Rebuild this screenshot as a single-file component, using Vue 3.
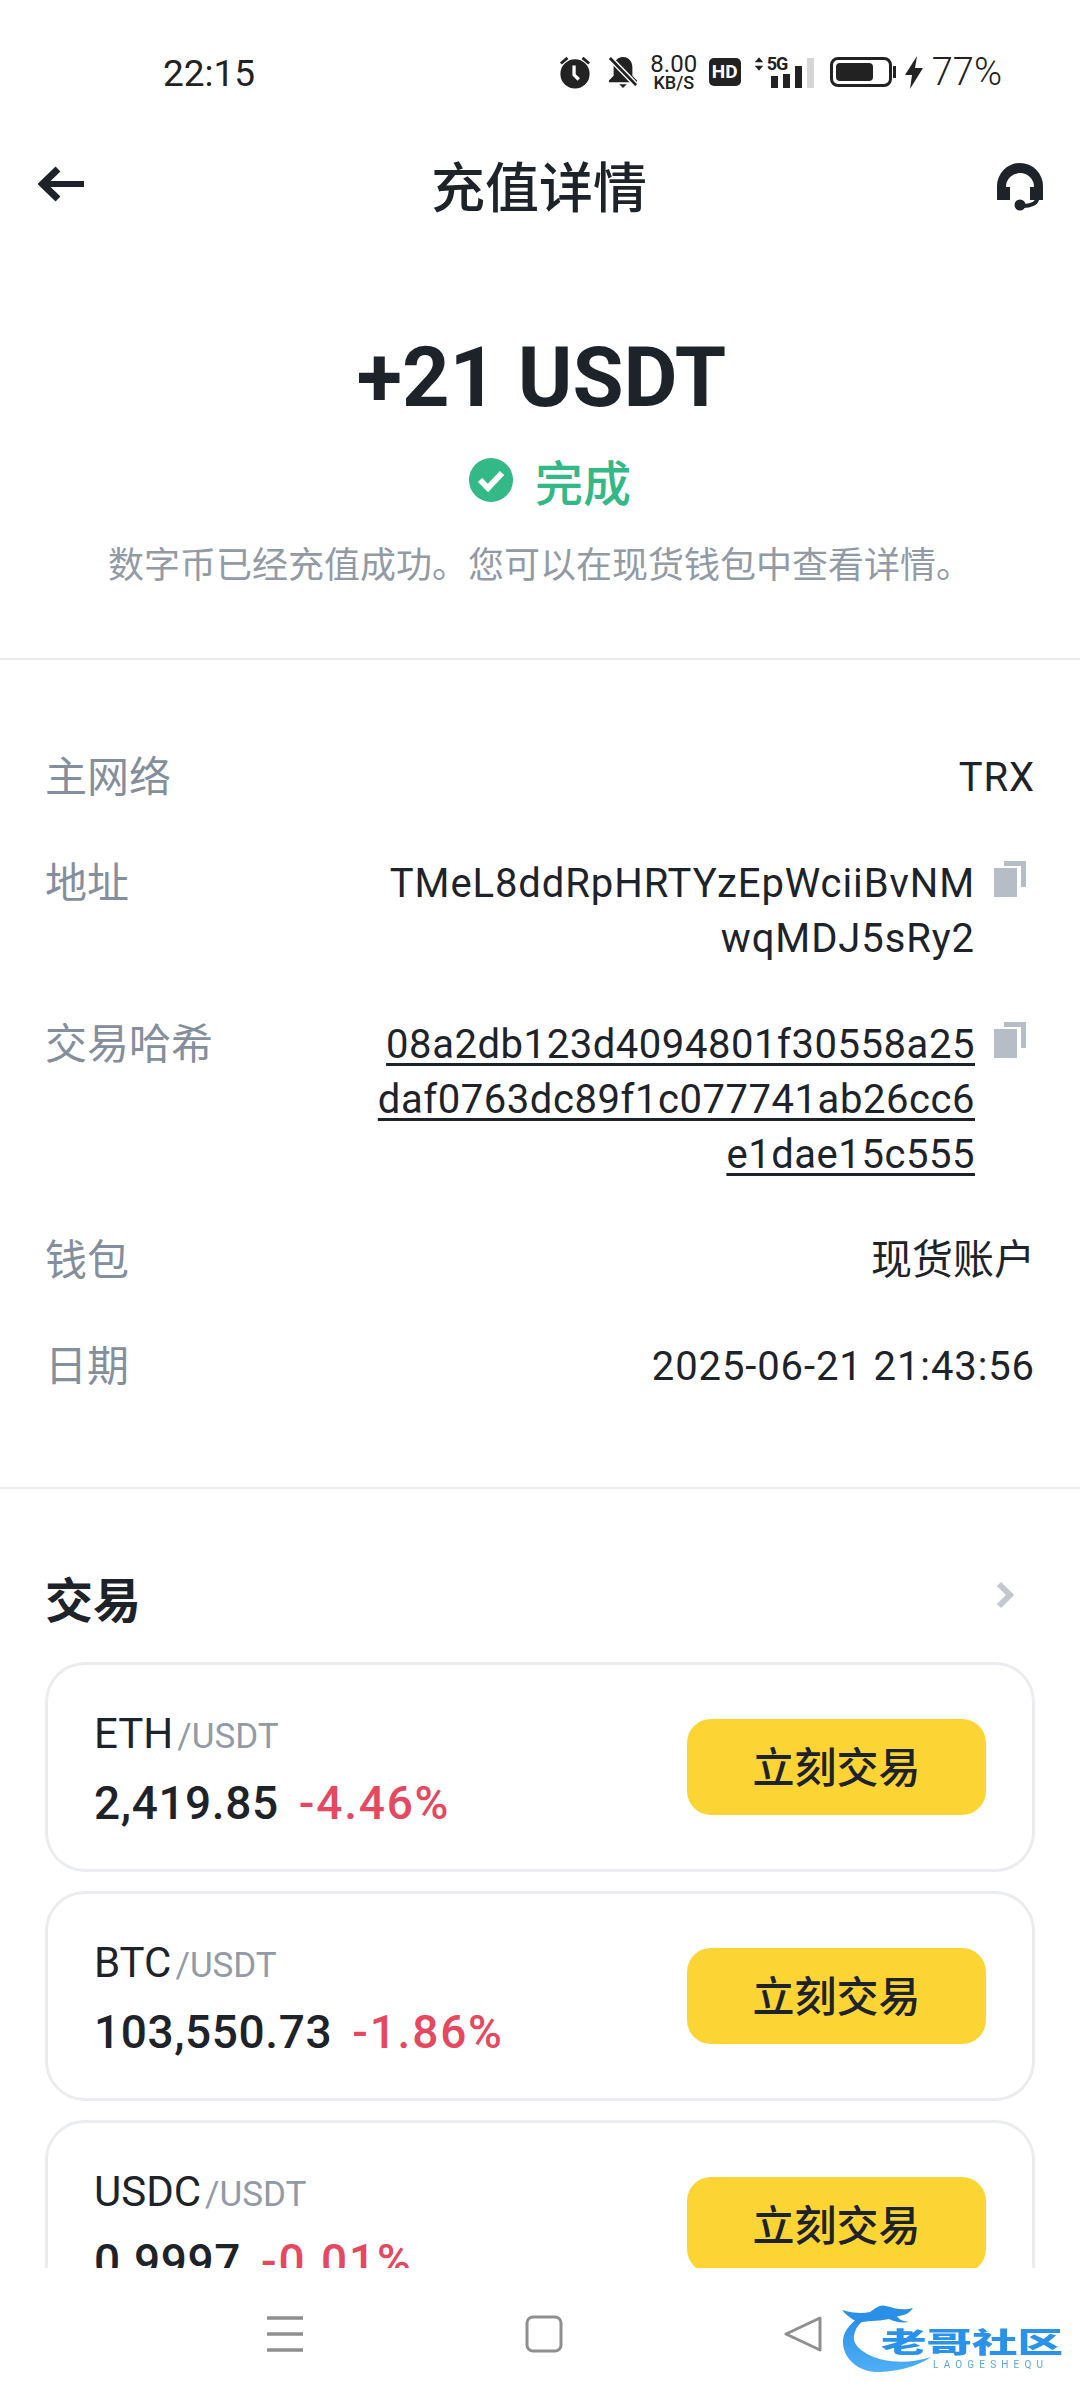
<template>
  <div class="page">
    <div class="status-bar">
      <span class="clock">22:15</span>
      <div class="status-icons">
        <svg class="alarm" width="32" height="34" viewBox="0 0 34 36">
          <circle cx="17" cy="20" r="15.5" fill="#222" />
          <path d="M16 11v10l5 5" fill="none" stroke="#fff" stroke-width="3.5" />
          <path d="M2 9l7-6M32 9l-7-6" stroke="#222" stroke-width="3" />
        </svg>
        <svg class="bell" width="30" height="34" viewBox="0 0 32 36">
          <path d="M16 2c-6 0-10 5-10 11v9l-5 5v2h30v-2l-5-5v-9C26 7 22 2 16 2z" fill="#222" />
          <path d="M12 31h8l-4 4z" fill="#222" />
          <path d="M3 4l27 28" stroke="#fff" stroke-width="6" />
          <path d="M2 3l28 29" stroke="#222" stroke-width="3" />
        </svg>
        <div class="speed">
          <span class="speed-num">8.00</span>
          <span class="speed-unit">KB/S</span>
        </div>
        <span class="hd">HD</span>
        <div class="signal">
          <svg width="10" height="14" viewBox="0 0 12 16">
            <path d="M6 0l5 6H1zM6 16l5-6H1z" fill="#222" />
          </svg>
          <span class="five-g">5G</span>
          <div class="bars">
            <i v-for="b in signalBars" :key="b.h" :class="{ off: b.off }" :style="{ height: b.h + 'px' }"></i>
          </div>
        </div>
        <div class="battery">
          <div class="battery-fill"></div>
        </div>
        <svg class="bolt" width="20" height="33" viewBox="0 0 20 33">
          <path d="M13 0L1 19h7l-2 14L19 12h-8z" fill="#222" />
        </svg>
        <span class="pct">77%</span>
      </div>
    </div>

    <div class="scroll-area">
      <header class="top-bar">
        <svg class="back" width="46" height="36" viewBox="0 0 46 36">
          <path d="M20 3L4.500 18 20 33" fill="none" stroke="#1e2329" stroke-width="7" />
          <path d="M6 18h40" stroke="#1e2329" stroke-width="6" />
        </svg>
        <h1 class="title">充值详情</h1>
        <svg class="support" width="46" height="48" viewBox="0 0 46 48">
          <path d="M0 37V23a23 23 0 0 1 46 0v14H33V24h4a14 14 0 0 0-28 0h4v13z" fill="#1e2329" />
          <path d="M40 36c0 4-6 7-14 7" fill="none" stroke="#1e2329" stroke-width="4" />
          <circle cx="23" cy="42" r="5.500" fill="#1e2329" />
        </svg>
      </header>

      <section class="hero">
        <div class="amount">+21 USDT</div>
        <div class="result">
          <svg width="46" height="46" viewBox="0 0 46 46">
            <circle cx="23" cy="23" r="22" fill="#32b987" />
            <path d="M12 23l8 8 14-15" fill="none" stroke="#fff" stroke-width="6" />
          </svg>
          <span>完成</span>
        </div>
        <p class="desc">数字币已经充值成功。您可以在现货钱包中查看详情。</p>
      </section>

      <section class="details">
        <div v-for="row in rows" :key="row.label" class="row">
          <span class="label">{{ row.label }}</span>
          <div class="value-wrap">
            <div class="value" :class="{ link: row.link, cjk: row.cjk }">
              <div v-for="line in row.lines" :key="line"><span>{{ line }}</span></div>
            </div>
            <svg v-if="row.copy" class="copy" width="34" height="36" viewBox="0 0 34 36">
              <path d="M10 0h22v26h-5V5H10z" fill="#b7bdc6" />
              <rect x="0" y="7" width="23" height="29" fill="#b7bdc6" />
            </svg>
          </div>
        </div>
      </section>

      <section class="trade">
        <div class="trade-head">
          <h2>交易</h2>
          <svg class="more" width="18" height="28" viewBox="0 0 18 28">
            <path d="M3 3l11 11L3 25" fill="none" stroke="#c4c8ce" stroke-width="6" />
          </svg>
        </div>
        <div v-for="pair in pairs" :key="pair.base" class="card">
          <div class="card-info">
            <div class="pair"><span class="base">{{ pair.base }}</span><span class="quote">/USDT</span></div>
            <div class="quote-line">
              <span class="price">{{ pair.price }}</span>
              <span class="change">{{ pair.change }}</span>
            </div>
          </div>
          <button class="trade-btn">立刻交易</button>
        </div>
      </section>
    </div>

    <nav class="nav-bar">
      <svg width="38" height="38" viewBox="0 0 38 38">
        <path d="M1 3h36M1 19h36M1 35h36" stroke="#8f8f8f" stroke-width="3.500" />
      </svg>
      <svg width="38" height="38" viewBox="0 0 38 38">
        <rect x="2" y="2" width="34" height="34" rx="6" fill="none" stroke="#8f8f8f" stroke-width="3" />
      </svg>
      <svg width="38" height="38" viewBox="0 0 38 38">
        <path d="M36 3L2 19l34 16z" fill="none" stroke="#8f8f8f" stroke-width="3" stroke-linejoin="round" />
      </svg>

      <svg class="watermark" width="230" height="80" viewBox="0 0 230 80">
        <defs>
          <linearGradient id="dragon" x1="0" y1="0" x2="0" y2="1">
            <stop offset="0" stop-color="#2a8fe6" />
            <stop offset="1" stop-color="#4fb0f5" />
          </linearGradient>
          <filter id="soft"><feGaussianBlur stdDeviation="0.5" /></filter>
        </defs>
        <g filter="url(#soft)">
          <path d="M22 16C8 24 2 34 3 44c2 18 19 29 37 28 20-1 38-6 51-15-15 5-33 6-47 3C26 56 12 46 14 36c1-8 6-14 14-18z" fill="url(#dragon)" />
          <path d="M2 10c10 3 20 4 28 2 6-4 10-8 16-6 8 2 16 5 27 2-4 6-10 8-16 8 2 4 6 5 12 6-8 1-14 0-20-3-6 1-12 2-18 2-6 0-10 2-14 1C10 18 5 14 2 10z" fill="#2a8fe6" />
          <text transform="translate(41 53) scale(1 0.62)" class="wm-cn" fill="#2a92ea" textLength="182" lengthAdjust="spacingAndGlyphs">老哥社区</text>
          <text x="93" y="68" class="wm-en" fill="#5aa6dc" textLength="110">LAOGESHEQU</text>
        </g>
      </svg>
    </nav>
  </div>
</template>

<script setup>
const signalBars = [
  { h: 12 },
  { h: 14 },
  { h: 22 },
  { h: 30, off: true }
]

const rows = [
  { label: '主网络', lines: ['TRX'] },
  { label: '地址', lines: ['TMeL8ddRpHRTYzEpWciiBvNM', 'wqMDJ5sRy2'], copy: true },
  {
    label: '交易哈希',
    lines: ['08a2db123d4094801f30558a25', 'daf0763dc89f1c077741ab26cc6', 'e1dae15c555'],
    copy: true,
    link: true
  },
  { label: '钱包', lines: ['现货账户'], cjk: true },
  { label: '日期', lines: ['2025-06-21 21:43:56'] }
]

const pairs = [
  { base: 'ETH', price: '2,419.85', change: '-4.46%' },
  { base: 'BTC', price: '103,550.73', change: '-1.86%' },
  { base: 'USDC', price: '0.9997', change: '-0.01%' }
]
</script>

<style>
html, body {
  margin: 0;
  background: #fff;
}
</style>

<style scoped>
.page {
  width: 1080px;
  height: 2400px;
  display: flex;
  flex-direction: column;
  background: #fff;
  color: #1e2329;
  font-family: Roboto, "Noto Sans CJK SC", sans-serif;
  overflow: hidden;
}
.status-bar {
  height: 144px;
  flex: none;
  display: flex;
  align-items: center;
  justify-content: space-between;
  padding: 0 78px 0 163px;
  color: #222;
}
.clock {
  font-size: 37px;
  padding-top: 2px;
}
.status-icons {
  display: flex;
  align-items: center;
}
.alarm { margin-right: 17px; }
.bell { margin-right: 11px; }
.speed {
  display: flex;
  flex-direction: column;
  align-items: center;
  width: 50px;
  margin-right: 10px;
  line-height: 1;
}
.speed-num { font-size: 24px; line-height: 21px; }
.speed-unit { font-size: 18px; font-weight: 500; line-height: 16px; }
.hd {
  width: 32px;
  height: 28px;
  background: #222;
  color: #fff;
  border-radius: 5px;
  font-size: 19px;
  font-weight: 700;
  line-height: 28px;
  text-align: center;
  margin-right: 13px;
}
.signal {
  position: relative;
  width: 59px;
  height: 31px;
  margin-right: 17px;
}
.signal svg {
  position: absolute;
  left: 0;
  top: 0;
}
.five-g {
  position: absolute;
  left: 13px;
  top: -3px;
  font-size: 18px;
  line-height: 20px;
  font-weight: 700;
  letter-spacing: -1px;
}
.bars {
  position: absolute;
  left: 17px;
  bottom: 0;
  display: flex;
  align-items: flex-end;
  gap: 5px;
}
.bars i {
  width: 7px;
  background: #222;
}
.bars i.off {
  background: #d6d6d6;
}
.battery {
  width: 62px;
  height: 30px;
  box-sizing: border-box;
  border: 3px solid #222;
  border-radius: 8px;
  padding: 3px;
  margin-right: 12px;
  position: relative;
}
.battery::after {
  content: "";
  position: absolute;
  right: -7px;
  top: 6px;
  width: 3px;
  height: 12px;
  background: #222;
}
.battery-fill {
  width: 75%;
  height: 100%;
  background: #222;
  border-radius: 4px;
}
.bolt { margin-right: 8px; }
.pct {
  font-size: 38px;
  font-weight: 300;
}
.scroll-area {
  flex: 1;
  min-height: 0;
  overflow: hidden;
}
.top-bar {
  height: 88px;
  display: flex;
  align-items: center;
  justify-content: space-between;
  padding: 0 37px 0 38px;
}
.back { margin-bottom: 8px; }
.support { margin-bottom: 3px; }
.title {
  margin: 3px 3px 0 0;
  font-size: 54px;
  font-weight: 500;
  line-height: 85px;
}
.hero {
  padding: 96px 0 67px;
  text-align: center;
  border-bottom: 2px solid #eaecef;
}
.amount {
  font-size: 83px;
  font-weight: 700;
  line-height: 100px;
  padding-left: 3px;
}
.result {
  margin-top: 22px;
  height: 60px;
  display: flex;
  align-items: center;
  justify-content: center;
  gap: 21px;
  padding-left: 19px;
  color: #32b987;
  font-size: 48px;
  font-weight: 500;
}
.desc {
  margin: 31px 0 0;
  font-size: 36px;
  line-height: 50px;
  color: #929aa5;
}
.details {
  padding: 90px 45px 93px;
  display: flex;
  flex-direction: column;
  gap: 51px;
  border-bottom: 2px solid #eaecef;
}
.row {
  display: flex;
  justify-content: space-between;
  font-size: 40px;
  line-height: 55px;
}
.label {
  color: #848e9c;
  font-size: 42px;
}
.value-wrap {
  display: flex;
  align-items: flex-start;
}
.value {
  text-align: right;
  letter-spacing: 0.9px;
}
.value.link {
  letter-spacing: 0.55px;
}
.value.cjk {
  font-size: 41px;
  letter-spacing: 0;
}
.value.link span {
  text-decoration: underline;
  text-decoration-thickness: 3px;
  text-underline-offset: 5px;
}
.copy {
  margin: 5px 7px 0 19px;
}
.trade {
  padding: 78px 46px 0;
}
.trade-head {
  height: 60px;
  display: flex;
  align-items: center;
  justify-content: space-between;
  margin-bottom: 35px;
  margin-left: -1px;
  padding-right: 20px;
}
.trade-head h2 {
  margin: 0;
  font-size: 48px;
  font-weight: 700;
}
.more { margin-bottom: 4px; }
.card {
  height: 210px;
  box-sizing: border-box;
  border: 3px solid #eaecef;
  border-radius: 40px;
  margin: 0 -1px 19px;
  padding: 0 46px;
  display: flex;
  align-items: center;
  justify-content: space-between;
}
.card-info {
  padding-top: 2px;
}
.pair {
  line-height: 50px;
}
.base {
  font-size: 42px;
}
.quote {
  font-size: 35px;
  color: #929aa5;
  margin-left: 4px;
}
.quote-line {
  margin-top: 10px;
  line-height: 50px;
  font-size: 46px;
  font-weight: 500;
}
.price {
  letter-spacing: 0.6px;
}
.change {
  margin-left: 20px;
  color: #e5485f;
  letter-spacing: 1.8px;
}
.trade-btn {
  width: 299px;
  height: 96px;
  border: none;
  border-radius: 24px;
  background: #fcd535;
  color: #1e2329;
  font-family: inherit;
  font-size: 42px;
  font-weight: 500;
  padding: 0 0 6px;
}
.nav-bar {
  position: relative;
  height: 132px;
  flex: none;
  background: #fff;
  display: flex;
  align-items: center;
  padding: 0 0 0 266px;
  gap: 221px;
  box-sizing: border-box;
}
.watermark {
  position: absolute;
  left: 840px;
  top: 32px;
}
.wm-cn {
  font-size: 46px;
  font-weight: 900;
}
.wm-en {
  font-size: 10px;
}
</style>
